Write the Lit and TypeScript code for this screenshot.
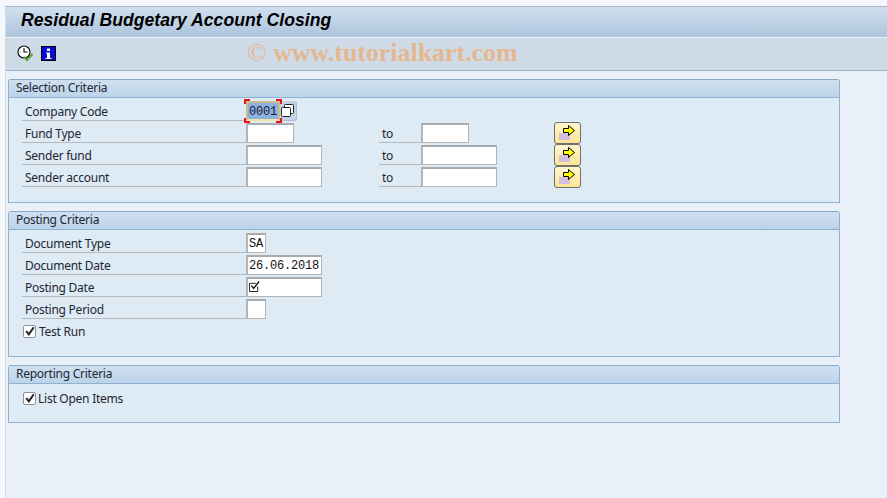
import { LitElement, html, css, svg } from "lit";
import { customElement } from "lit/decorators.js";

const clockIcon = svg`<svg class="ico" width="17" height="17" viewBox="0 0 17 17">
  <circle cx="7" cy="7" r="6" fill="#fff" stroke="#111" stroke-width="1.2"/>
  <path d="M7 3v4h3.500" fill="none" stroke="#111" stroke-width="1.100"/>
  <path d="M3 7h1M7 11v1" stroke="#888" stroke-width="1"/>
  <path d="M7.500 12.500l2.500 2.500 5.500-6" fill="none" stroke="#5ea63a" stroke-width="2.200"/>
</svg>`;
const infoIcon = svg`<svg class="ico" width="15" height="15" viewBox="0 0 15 15">
  <rect x="0" y="0" width="15" height="15" fill="#0a0ad6"/>
  <rect x="0.500" y="0.500" width="14" height="14" fill="none" stroke="#000" stroke-width="1"/>
  <path d="M6 2.500h3v2.500h-3zM5 6.500h4v5.500h1.500v1h-6v-1h1.500v-4.500h-1z" fill="#fff"/>
</svg>`;
const arrowIcon = svg`<svg width="17" height="16" viewBox="0 0 17 16">
  <rect x="0" y="8" width="11" height="7" fill="#d4bfdc"/>
  <path d="M4.500 3.500h5v-3l6 5-6 5v-3h-5z" fill="#ffff00" stroke="#000" stroke-width="1"/>
</svg>`;
const copyIcon = svg`<svg width="13" height="13" viewBox="0 0 13 13">
  <rect x="3.500" y="0.500" width="9" height="9" rx="1" fill="#fff" stroke="#222"/>
  <rect x="0.500" y="3.500" width="9" height="9" rx="1" fill="#fff" stroke="#222"/>
</svg>`;
const tickBox = svg`<svg class="tick" width="11" height="11" viewBox="0 0 12 12">
  <path d="M9.500 6v5.500h-9v-9h7" fill="none" stroke="#111" stroke-width="1"/>
  <path d="M2.500 5l2.500 3 6-7.500" fill="none" stroke="#111" stroke-width="1.500"/>
</svg>`;
const checkMark = svg`<svg width="10" height="10" viewBox="0 0 10 10">
  <path d="M1.200 5l2.600 3.400L8.800 1.200" fill="none" stroke="#222" stroke-width="2"/>
</svg>`;

@customElement("app-root")
export class AppRoot extends LitElement {
  static styles = css`
    :host {
      display: block;
      width: 887px;
      height: 498px;
      overflow: hidden;
      background: #f4f7fb;
      font-family: "Noto Sans", "Liberation Sans", sans-serif;
      font-size: 12px;
      letter-spacing: -0.25px;
      color: #1c2733;
    }
    .window {
      margin: 6px 0 0 5px;
      height: 492px;
      border-top: 1px solid #a8b6c8;
      border-left: 1px solid #d3dce6;
      background: #e9f0f7;
      display: flex;
      flex-direction: column;
    }
    .titlebar {
      height: 31px;
      box-sizing: border-box;
      padding: 0 0 3px 15px;
      display: flex;
      align-items: center;
      background: linear-gradient(#d0e0ef, #adc4dc);
      font-family: "Liberation Sans", Arial, sans-serif;
      font-weight: bold;
      font-style: italic;
      font-size: 17.6px;
      letter-spacing: 0.03px;
      color: #000;
      border-bottom: 1px solid #e9f0f6;
    }
    .toolbar {
      position: relative;
      height: 33px;
      box-sizing: border-box;
      background: #cedbe7;
      border-bottom: 1px solid #9fb1c6;
      display: flex;
      align-items: center;
      padding: 0 0 2px 11px;
      gap: 7px;
    }
    .ico { display: block; }
    .watermark {
      position: absolute;
      left: 241px;
      top: 0;
      font-family: "Liberation Serif", serif;
      font-weight: bold;
      font-size: 25.9px;
      letter-spacing: 0;
      color: #e5b78f;
      white-space: nowrap;
    }
    .copyright { font-weight: normal; }
    .content {
      padding: 8px 0 0 2px;
      display: flex;
      flex-direction: column;
      gap: 8px;
    }
    .group {
      width: 832px;
      box-sizing: border-box;
      border: 1px solid #8fb0d0;
      border-top-color: #86a9ca;
      border-radius: 3px 3px 0 0;
      background: #deeaf4;
    }
    .group-head {
      height: 18px;
      box-sizing: border-box;
      padding-left: 7px;
      line-height: 15px;
      background: linear-gradient(#cfe0f0, #bcd3e8);
      border-bottom: 1px solid #8fb0d0;
    }
    .body {
      padding: 2px 0 0 13px;
      box-sizing: border-box;
    }
    .g1 { height: 124px; }
    .g2 { height: 146px; }
    .g3 { height: 58px; }
    .row {
      display: flex;
      height: 22px;
    }
    .label, .to {
      height: 21px;
      box-sizing: border-box;
      padding: 1px 0 0 3px;
      line-height: 21px;
      border-bottom: 1px solid #b4b9be;
    }
    .label { width: 224px; }
    .cell {
      width: 133px;
      display: flex;
    }
    .to { width: 42px; }
    .input {
      height: 20px;
      margin-top: 1px;
      box-sizing: border-box;
      background: #fff;
      border: 1px solid #b2b5b8;
      border-top-width: 2px;
      border-left-width: 2px;
      border-top-color: #a8abae;
      font-family: "Liberation Mono", monospace;
      font-size: 12px;
      letter-spacing: -0.2px;
      line-height: 16px;
      padding-left: 1px;
      color: #111;
      display: flex;
      align-items: center;
    }
    .tick { margin-bottom: 2px; }
    .w20 { width: 20px; }
    .w48 { width: 48px; }
    .w76 { width: 76px; }
    .focus-wrap {
      position: relative;
      display: flex;
      height: 20px;
      margin-top: 1px;
    }
    .focus {
      width: 34px;
      height: 20px;
      box-sizing: border-box;
      border: 2px solid #c9bd8f;
      border-bottom-color: #f3e5a0;
      background: #8eb0dc;
      font-family: "Liberation Mono", monospace;
      letter-spacing: -0.2px;
      padding-left: 1px;
      line-height: 18px;
      color: #16213f;
    }
    .help {
      width: 17px;
      height: 20px;
      box-sizing: border-box;
      background: #c3d2e2;
      border-radius: 0 3px 3px 0;
      border-right: 1px solid #aebfd2;
      border-bottom: 1px solid #aebfd2;
      display: flex;
      align-items: center;
      justify-content: center;
      padding-right: 2px;
    }
    .corner {
      position: absolute;
      width: 4px;
      height: 3px;
      border: 0 solid #e8141c;
    }
    .tl { left: -2px; top: -2px; border-width: 2px 0 0 2px; }
    .tr { left: 30px; top: -2px; border-width: 2px 2px 0 0; }
    .bl { left: -2px; top: 17px; border-width: 0 0 2px 2px; }
    .br { left: 30px; top: 17px; border-width: 0 2px 2px 0; }
    .btn {
      width: 27px;
      height: 22px;
      box-sizing: border-box;
      border: 1px solid #6e6e6a;
      border-radius: 3px;
      background: linear-gradient(#fff6d2, #fde596);
      display: flex;
      align-items: center;
      justify-content: center;
    }
    .check-row {
      display: flex;
      align-items: center;
      height: 22px;
      padding-left: 1px;
      gap: 3px;
    }
    .g3 .check-row { gap: 2px; }
    .checkbox {
      width: 13px;
      height: 13px;
      box-sizing: border-box;
      border: 1px solid #8a949e;
      border-radius: 2px;
      background: #fff;
      display: flex;
      align-items: center;
      justify-content: center;
    }
    .g3 .body { padding-top: 3px; }
  `;

  private field(cls: string, text: unknown = "") {
    return html`<div class="input ${cls}">${text}</div>`;
  }

  private rangeRow(label: string, cls: string) {
    return html`<div class="row">
      <div class="label">${label}</div>
      <div class="cell">${this.field(cls)}</div>
      <div class="to">to</div>
      <div class="cell">${this.field(cls)}</div>
      <div class="btn">${arrowIcon}</div>
    </div>`;
  }

  private simpleRow(label: string, cls: string, text: unknown = "") {
    return html`<div class="row">
      <div class="label">${label}</div>
      ${this.field(cls, text)}
    </div>`;
  }

  private check(label: string) {
    return html`<div class="check-row">
      <div class="checkbox">${checkMark}</div><span>${label}</span>
    </div>`;
  }

  render() {
    return html`<div class="window">
      <div class="titlebar">Residual Budgetary Account Closing</div>
      <div class="toolbar">
        ${clockIcon}${infoIcon}
        <div class="watermark"><span class="copyright">©</span> www.tutorialkart.com</div>
      </div>
      <div class="content">
        <section class="group g1">
          <div class="group-head">Selection Criteria</div>
          <div class="body">
            <div class="row">
              <div class="label">Company Code</div>
              <div class="focus-wrap">
                <div class="focus">0001</div>
                <div class="help">${copyIcon}</div>
                <i class="corner tl"></i><i class="corner tr"></i>
                <i class="corner bl"></i><i class="corner br"></i>
              </div>
            </div>
            ${this.rangeRow("Fund Type", "w48")}
            ${this.rangeRow("Sender fund", "w76")}
            ${this.rangeRow("Sender account", "w76")}
          </div>
        </section>
        <section class="group g2">
          <div class="group-head">Posting Criteria</div>
          <div class="body">
            ${this.simpleRow("Document Type", "w20", "SA")}
            ${this.simpleRow("Document Date", "w76", "26.06.2018")}
            ${this.simpleRow("Posting Date", "w76", tickBox)}
            ${this.simpleRow("Posting Period", "w20")}
            ${this.check("Test Run")}
          </div>
        </section>
        <section class="group g3">
          <div class="group-head">Reporting Criteria</div>
          <div class="body">${this.check("List Open Items")}</div>
        </section>
      </div>
    </div>`;
  }
}
